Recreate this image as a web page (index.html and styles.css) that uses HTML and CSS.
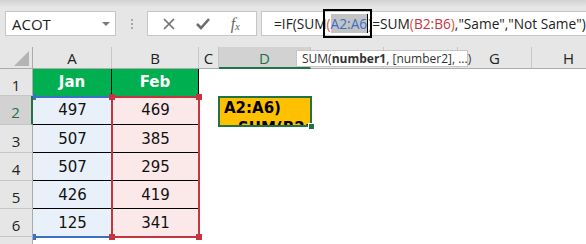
FILE: index.html
```html
<!doctype html>
<html lang="en">
<head>
  <meta charset="utf-8">
  <title>IF SUM compare</title>
  <link rel="stylesheet" href="styles.css">
</head>
<body>
  <div class="toolbar">
    <div class="namebox">
      <span>ACOT</span>
      <span class="caret"></span>
    </div>
    <div class="grip"><i></i><i></i><i></i></div>
    <div class="fxbox">
      <svg width="12" height="12" viewBox="0 0 12 12"><path d="M1 1 L11 11 M11 1 L1 11" stroke="#6d6d6d" stroke-width="1.6" fill="none"/></svg>
      <svg width="14" height="12" viewBox="0 0 14 12"><path d="M1 6 L5 10 L13 1" stroke="#6d6d6d" stroke-width="2.6" fill="none"/></svg>
      <span class="fx">f<sub>x</sub></span>
    </div>
    <div class="formula">=IF(SUM<span class="mark"><span class="paren">(</span><span class="ref-a">A2:A6</span><span class="paren">)</span></span>=SUM<span class="paren">(</span><span class="ref-b">B2:B6</span><span class="paren">)</span>,"Same","Not Same")</div>
  </div>

  <div class="sheet">
    <div class="corner"><span class="tri"></span></div>
    <div class="colhead">A</div>
    <div class="colhead">B</div>
    <div class="colhead">C</div>
    <div class="colhead sel">D</div>
    <div class="colhead">E</div>
    <div class="colhead">F</div>
    <div class="colhead">G</div>
    <div class="colhead">H</div>

    <div class="rowhead">1</div>
    <div class="cell head">Jan</div>
    <div class="cell head">Feb</div>
    <div class="cell"></div><div class="cell"></div><div class="cell"></div><div class="cell"></div><div class="cell"></div><div class="cell"></div>

    <div class="rowhead sel">2</div>
    <div class="cell jan">497</div>
    <div class="cell feb">469</div>
    <div class="cell"></div>
    <div class="cell active-wrap">
      <div class="active">A2:A6)<br><span class="wrap">SUM(B2:B6)</span></div>
      <span class="fill-handle"></span>
    </div>
    <div class="cell"></div><div class="cell"></div><div class="cell"></div><div class="cell"></div>

    <div class="rowhead">3</div>
    <div class="cell jan">507</div>
    <div class="cell feb">385</div>
    <div class="cell"></div><div class="cell"></div><div class="cell"></div><div class="cell"></div><div class="cell"></div><div class="cell"></div>

    <div class="rowhead">4</div>
    <div class="cell jan">507</div>
    <div class="cell feb">295</div>
    <div class="cell"></div><div class="cell"></div><div class="cell"></div><div class="cell"></div><div class="cell"></div><div class="cell"></div>

    <div class="rowhead">5</div>
    <div class="cell jan">426</div>
    <div class="cell feb">419</div>
    <div class="cell"></div><div class="cell"></div><div class="cell"></div><div class="cell"></div><div class="cell"></div><div class="cell"></div>

    <div class="rowhead">6</div>
    <div class="cell jan last">125</div>
    <div class="cell feb last">341</div>
    <div class="cell"></div><div class="cell"></div><div class="cell"></div><div class="cell"></div><div class="cell"></div><div class="cell"></div>

    <div class="rowhead"></div>
    <div class="cell"></div><div class="cell"></div><div class="cell"></div><div class="cell"></div><div class="cell"></div><div class="cell"></div><div class="cell"></div><div class="cell"></div>

    <!-- range outlines drawn over the cells -->
    <div class="range-a"><i class="h tl"></i><i class="h bl"></i></div>
    <div class="range-b"><i class="h tl"></i><i class="h tr"></i><i class="h bl"></i><i class="h br"></i></div>

    <div class="tip">SUM(<b>number1</b>, [number2], ...)</div>
  </div>
</body>
</html>
```

FILE: styles.css
```css
:root {
  --chrome:     #e6e6e6;
  --chrome-sel: #d2d2d2;
  --line:       #c6c6c6;
  --xl-green:   #217346;
  --blue:       #3c6fc6;
  --red:        #c4363f;
}
*, *::before, *::after { box-sizing: border-box; }
body {
  margin: 0;
  width: 586px;
  height: 244px;
  overflow: hidden;
  background: #fff;
  font-family: "Open Sans", "Noto Sans", sans-serif;
  color: #222;
}

/* ── formula bar ─────────────────────────────────────── */
.toolbar {
  height: 47px;
  padding-top: 11px;
  display: flex;
  align-items: flex-start;
  background: linear-gradient(#d2d2d2, var(--chrome) 7px);
}
.namebox, .fxbox, .formula {
  height: 25px;
  background: #fff;
  border: 1px solid var(--line);
}
.namebox {
  margin-left: 5px;
  width: 111px;
  display: flex;
  align-items: center;
  justify-content: space-between;
  padding: 0 5px 0 6px;
  font-size: 15px;
  color: #222;
}
.caret {
  width: 0; height: 0;
  border-left: 4px solid transparent;
  border-right: 4px solid transparent;
  border-top: 4px solid #7a7a7a;
}
.grip {
  width: 31px;
  display: flex;
  flex-direction: column;
  align-items: center;
  gap: 2px;
  padding-top: 8px;
}
.grip i { width: 2px; height: 2px; background: #a8a8a8; }
.fxbox {
  width: 110px;
  display: flex;
  align-items: center;
  justify-content: space-between;
  padding: 0 16px 0 15px;
}
.fx {
  font-family: "Liberation Serif", serif;
  font-style: italic;
  font-size: 16px;
  color: #666;
  line-height: 1;
}
.fx sub { font-size: 11px; vertical-align: -1px; }
.formula {
  margin-left: 4px;
  flex: 1;
  border-right: none;
  padding-left: 12px;
  font-size: 13.7px;
  line-height: 23px;
  white-space: nowrap;
  color: #222;
}
.paren { color: #e0553a; }
.mark { position: relative; }
.mark::after {
  content: "";
  position: absolute;
  top: -5px; bottom: -5px;
  left: -4px; right: 0;
  border: 2px solid #000;
}
.ref-a {
  color: var(--blue);
  background: #c3c3c3;
  border-right: 1px solid #000;
}
.ref-b { color: var(--red); }

/* ── grid ────────────────────────────────────────────── */
.sheet {
  position: relative;
  display: grid;
  grid-template-columns: 33px 79px 87px 20px 92px 73px 74px 74px 74px;
  grid-template-rows: 22px 27px 29px 28px 28px 28px 28px 28px;
}
.corner, .colhead, .rowhead { background: var(--chrome); color: #222; }
.corner {
  border-right: 1px solid #ababab;
  border-bottom: 1px solid #ababab;
  display: flex;
  align-items: flex-end;
  justify-content: flex-end;
  padding: 0 3px 2px 0;
}
.tri {
  width: 0; height: 0;
  border-left: 15px solid transparent;
  border-bottom: 15px solid #b4b4b4;
}
.colhead {
  border-right: 1px solid var(--line);
  border-bottom: 1px solid #ababab;
  text-align: center;
  font-size: 15px;
  line-height: 22px;
}
.colhead.sel {
  background: var(--chrome-sel);
  color: var(--xl-green);
  border-bottom: 2px solid var(--xl-green);
}
.rowhead {
  border-right: 1px solid #ababab;
  border-bottom: 1px solid var(--line);
  text-align: center;
  font-size: 15px;
  padding-top: 6px;
}
.rowhead.sel {
  background: var(--chrome-sel);
  color: var(--xl-green);
  border-right: 2px solid var(--xl-green);
}
.cell {
  font-family: "DejaVu Sans", Verdana, sans-serif;
  font-size: 15px;
  text-align: center;
  color: #111;
  padding-top: 5px;
}
.cell.head {
  background: #00b050;
  color: #fff;
  font-weight: 700;
  border-right: 1px solid #000;
  padding-top: 4px;
}
.cell.jan { background: #e8f0f9; border-bottom: 1px solid #000; }
.cell.feb { background: #fbe9e9; border-bottom: 1px solid #000; }
.cell.last { border-bottom: none; }

.active-wrap { position: relative; padding: 0; }
.active {
  position: absolute;
  inset: 0 -1px -2px -1px;
  background: #ffc000;
  border: 2px solid var(--xl-green);
  overflow: hidden;
  text-align: left;
  font-weight: 700;
  font-size: 15px;
  line-height: 20px;
  padding: 0 0 0 4px;
  white-space: nowrap;
  color: #000;
}
.active .wrap { margin-left: 14px; }
.fill-handle {
  position: absolute;
  right: -3px; bottom: -4px;
  width: 6px; height: 6px;
  background: var(--xl-green);
  border-left: 1px solid #fff;
  border-top: 1px solid #fff;
}

/* ── range outlines ──────────────────────────────────── */
.range-a, .range-b { position: absolute; top: 49px; height: 142px; }
.range-a {
  left: 34px; width: 79px;
  border-top: 2px solid var(--blue);
  border-bottom: 2px solid var(--blue);
}
.range-b {
  left: 111px; width: 89px;
  border: 2px solid var(--red);
}
.h { position: absolute; width: 6px; height: 6px; }
.range-a .h { width: 3px; background: var(--blue); left: -1px; }
.range-b .h { background: var(--red); }
.h.tl, .h.tr { top: -4px; }
.h.bl, .h.br { bottom: -4px; }
.range-b .h.tl, .range-b .h.bl { left: -4px; }
.h.tr, .h.br { right: -4px; }

/* ── function tooltip ────────────────────────────────── */
.tip {
  position: absolute;
  left: 296px; top: 3px;
  width: 172px; height: 17px;
  background: #fff;
  border: 1px solid var(--line);
  font-size: 12px;
  line-height: 15px;
  padding-left: 5px;
  white-space: nowrap;
  color: #333;
}
```
